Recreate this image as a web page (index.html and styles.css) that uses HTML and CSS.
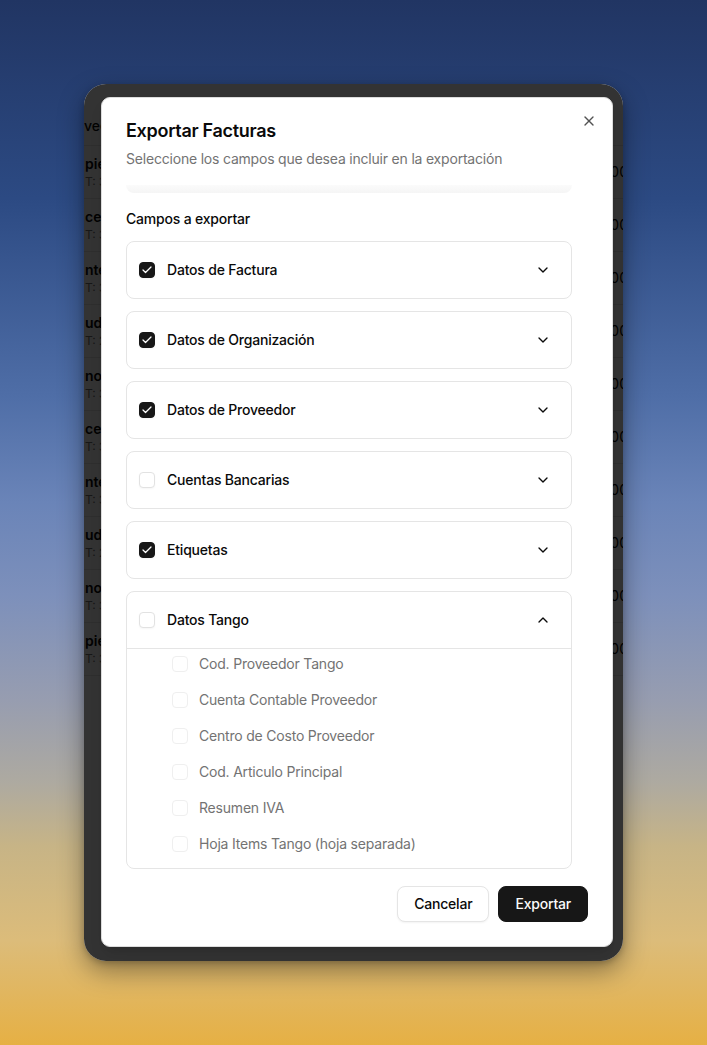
FILE: index.html
```html
<!DOCTYPE html>
<html lang="es">
<head>
<meta charset="utf-8">
<title>Exportar Facturas</title>
<link rel="stylesheet" href="styles.css">
</head>
<body>
<div class="stage">
  <div class="window">
    <div class="table">
      <div class="thead"><span class="th">veedor</span></div>
      <div class="row"><div class="who"><span class="name">pieza Integral SA</span><span class="cuit">T: 30-71526389-4</span></div><span class="amount">$ 1.245.300,00</span></div>
      <div class="row"><div class="who"><span class="name">ceros del Plata SRL</span><span class="cuit">T: 30-70984512-7</span></div><span class="amount">$ 318.450,00</span></div>
      <div class="row"><div class="who"><span class="name">nte Logística SA</span><span class="cuit">T: 30-71233018-2</span></div><span class="amount">$ 86.900,00</span></div>
      <div class="row"><div class="who"><span class="name">udio Contable Ruiz</span><span class="cuit">T: 27-28455109-3</span></div><span class="amount">$ 150.000,00</span></div>
      <div class="row"><div class="who"><span class="name">nos Hermanos SRL</span><span class="cuit">T: 30-70211487-9</span></div><span class="amount">$ 52.780,00</span></div>
      <div class="row"><div class="who"><span class="name">ceros Andinos SA</span><span class="cuit">T: 30-71640025-1</span></div><span class="amount">$ 734.120,00</span></div>
      <div class="row"><div class="who"><span class="name">nte Distribuciones</span><span class="cuit">T: 30-71098833-6</span></div><span class="amount">$ 96.300,00</span></div>
      <div class="row"><div class="who"><span class="name">udio Jurídico Paz</span><span class="cuit">T: 27-30118452-8</span></div><span class="amount">$ 210.000,00</span></div>
      <div class="row"><div class="who"><span class="name">nos Insumos SA</span><span class="cuit">T: 30-70876644-0</span></div><span class="amount">$ 41.560,00</span></div>
      <div class="row"><div class="who"><span class="name">pieza Total SRL</span><span class="cuit">T: 30-71412290-5</span></div><span class="amount">$ 128.900,00</span></div>
    </div>
    <div class="overlay"></div>

    <div class="dialog" role="dialog" aria-labelledby="dlg-title">
      <div class="dialog-header">
        <h2 id="dlg-title" class="dialog-title">Exportar Facturas</h2>
        <p class="dialog-desc">Seleccione los campos que desea incluir en la exportación</p>
      </div>

      <div class="dialog-body">
        <div class="scroll-cap"></div>
        <div class="section-label">Campos a exportar</div>
        <div class="field-list">
          <div class="group">
            <div class="group-head">
              <span class="cb checked"><svg viewBox="0 0 24 24"><path d="M20 6 9 17l-5-5"/></svg></span>
              <span class="group-label">Datos de Factura</span>
              <span class="toggle"><svg viewBox="0 0 24 24"><path d="m6 9 6 6 6-6"/></svg></span>
            </div>
          </div>
          <div class="group">
            <div class="group-head">
              <span class="cb checked"><svg viewBox="0 0 24 24"><path d="M20 6 9 17l-5-5"/></svg></span>
              <span class="group-label">Datos de Organización</span>
              <span class="toggle"><svg viewBox="0 0 24 24"><path d="m6 9 6 6 6-6"/></svg></span>
            </div>
          </div>
          <div class="group">
            <div class="group-head">
              <span class="cb checked"><svg viewBox="0 0 24 24"><path d="M20 6 9 17l-5-5"/></svg></span>
              <span class="group-label">Datos de Proveedor</span>
              <span class="toggle"><svg viewBox="0 0 24 24"><path d="m6 9 6 6 6-6"/></svg></span>
            </div>
          </div>
          <div class="group">
            <div class="group-head">
              <span class="cb"></span>
              <span class="group-label">Cuentas Bancarias</span>
              <span class="toggle"><svg viewBox="0 0 24 24"><path d="m6 9 6 6 6-6"/></svg></span>
            </div>
          </div>
          <div class="group">
            <div class="group-head">
              <span class="cb checked"><svg viewBox="0 0 24 24"><path d="M20 6 9 17l-5-5"/></svg></span>
              <span class="group-label">Etiquetas</span>
              <span class="toggle"><svg viewBox="0 0 24 24"><path d="m6 9 6 6 6-6"/></svg></span>
            </div>
          </div>
          <div class="group">
            <div class="group-head">
              <span class="cb"></span>
              <span class="group-label">Datos Tango</span>
              <span class="toggle"><svg viewBox="0 0 24 24"><path d="m18 15-6-6-6 6"/></svg></span>
            </div>
            <div class="sub-list">
              <div class="sub-item"><span class="cb sub"></span><span>Cod. Proveedor Tango</span></div>
              <div class="sub-item"><span class="cb sub"></span><span>Cuenta Contable Proveedor</span></div>
              <div class="sub-item"><span class="cb sub"></span><span>Centro de Costo Proveedor</span></div>
              <div class="sub-item"><span class="cb sub"></span><span>Cod. Articulo Principal</span></div>
              <div class="sub-item"><span class="cb sub"></span><span>Resumen IVA</span></div>
              <div class="sub-item"><span class="cb sub"></span><span>Hoja Items Tango (hoja separada)</span></div>
            </div>
          </div>
        </div>
      </div>

      <div class="dialog-footer">
        <button class="btn btn-outline" type="button">Cancelar</button>
        <button class="btn btn-primary" type="button">Exportar</button>
      </div>

      <button class="close" type="button" aria-label="Cerrar"><svg viewBox="0 0 24 24"><path d="M18 6 6 18"/><path d="m6 6 12 12"/></svg></button>
    </div>
  </div>
</div>
</body>
</html>
```

FILE: styles.css
```css
* { box-sizing: border-box; }

html, body { margin: 0; }

body {
  font-family: Inter, "Noto Sans", "Liberation Sans", sans-serif;
  color: #0a0a0a;
  min-height: 1045px;
  background: linear-gradient(180deg,
    #213563 0%,
    #2c4a83 19%,
    #4f6ea7 38%,
    #6a84b8 48%,
    #7d90bb 57%,
    #979db0 67%,
    #aeaaa0 75%,
    #c7b486 81%,
    #dcbc7a 90%,
    #e6b044 100%);
}

.stage {
  height: 1045px;
  padding: 84px 0 0 84px;
}

/* app window behind the modal */
.window {
  position: relative;
  width: 539px;
  height: 877px;
  border-radius: 22px;
  overflow: hidden;
  background: #fff;
  box-shadow: 0 10px 26px rgba(0, 0, 0, .38), 0 2px 6px rgba(0, 0, 0, .2);
}

.table {
  width: 560px;
}

.thead {
  height: 62px;
  padding-top: 31px;
  border-bottom: 1px solid #e5e5e5;
}

.th {
  font-size: 14px;
  line-height: 20px;
  font-weight: 500;
  color: #0a0a0a;
  white-space: nowrap;
}

.row {
  height: 53px;
  display: flex;
  align-items: center;
  justify-content: space-between;
  border-bottom: 1px solid #e5e5e5;
  padding-right: 16px;
}

.who {
  display: flex;
  flex-direction: column;
  margin-top: -1px;
  padding-left: 1px;
}

.name {
  font-size: 14px;
  line-height: 20px;
  font-weight: 600;
  white-space: nowrap;
}

.cuit {
  font-size: 12px;
  line-height: 16px;
  color: #737373;
  white-space: nowrap;
}

.amount {
  font-size: 14px;
  line-height: 20px;
  white-space: nowrap;
}

.overlay {
  position: absolute;
  inset: 0;
  background: rgba(0, 0, 0, .8);
}

/* modal */
.dialog {
  position: absolute;
  top: 13px;
  left: 17px;
  width: 512px;
  background: #fff;
  border: 1px solid #dcdcdc;
  border-radius: 9px;
  padding: 24px 24px 24px;
  display: flex;
  flex-direction: column;
  gap: 16px;
  letter-spacing: -0.2px;
  box-shadow: 0 10px 15px -3px rgba(0, 0, 0, .1), 0 4px 6px -4px rgba(0, 0, 0, .1);
}

.dialog-header {
  display: flex;
  flex-direction: column;
  gap: 9px;
}

.dialog-title {
  margin: 0;
  font-size: 18px;
  line-height: 18px;
  font-weight: 600;
  letter-spacing: -0.3px;
}

.dialog-desc {
  margin: 0;
  font-size: 14px;
  line-height: 20px;
  color: #737373;
}

.dialog-body {
  padding-right: 16px;
  display: flex;
  flex-direction: column;
}

.scroll-cap {
  height: 8px;
  border-radius: 0 0 10px 10px;
  background: linear-gradient(180deg, #fbfbfb, #f5f5f5);
}

.section-label {
  margin-top: 16px;
  font-size: 14px;
  line-height: 20px;
  font-weight: 500;
}

.field-list {
  margin-top: 12px;
  display: flex;
  flex-direction: column;
  gap: 12px;
}

.group {
  border: 1px solid #e5e5e5;
  border-radius: 8px;
}

.group-head {
  height: 56px;
  display: flex;
  align-items: center;
  gap: 12px;
  padding: 0 12px;
}

.group-label {
  flex: 1;
  font-size: 14px;
  line-height: 20px;
  font-weight: 500;
}

.cb {
  flex: none;
  width: 16px;
  height: 16px;
  border-radius: 4px;
  border: 1px solid #e2e2e2;
  background: #fff;
  display: flex;
  align-items: center;
  justify-content: center;
  box-shadow: 0 1px 2px rgba(0, 0, 0, .04);
}

.cb.checked {
  background: #171717;
  border-color: #171717;
}

.cb svg {
  width: 12px;
  height: 12px;
  fill: none;
  stroke: #fff;
  stroke-width: 2.5;
  stroke-linecap: round;
  stroke-linejoin: round;
}

.cb.sub {
  border-color: #efefef;
  box-shadow: none;
}

.toggle {
  width: 32px;
  height: 32px;
  display: flex;
  align-items: center;
  justify-content: center;
  border-radius: 6px;
}

.toggle svg {
  width: 16px;
  height: 16px;
  fill: none;
  stroke: #0a0a0a;
  stroke-width: 2;
  stroke-linecap: round;
  stroke-linejoin: round;
}

.sub-list {
  border-top: 1px solid #e5e5e5;
  padding: 5px 16px 14px 45px;
  display: flex;
  flex-direction: column;
  gap: 16px;
}

.sub-item {
  height: 20px;
  display: flex;
  align-items: center;
  gap: 11px;
  font-size: 14px;
  line-height: 20px;
  color: #737373;
}

.dialog-footer {
  display: flex;
  justify-content: flex-end;
  gap: 9px;
  margin-top: 1px;
}

.btn {
  height: 36px;
  padding: 0 16px;
  border-radius: 8px;
  font-family: inherit;
  font-size: 14px;
  font-weight: 500;
  line-height: 20px;
  letter-spacing: -0.2px;
  cursor: pointer;
}

.btn-outline {
  background: #fff;
  color: #0a0a0a;
  border: 1px solid #e5e5e5;
  box-shadow: 0 1px 2px rgba(0, 0, 0, .05);
}

.btn-primary {
  background: #171717;
  color: #fafafa;
  border: 1px solid #171717;
}

.close {
  position: absolute;
  top: 15px;
  right: 15px;
  width: 16px;
  height: 16px;
  padding: 0;
  border: 0;
  background: none;
  opacity: .7;
  cursor: pointer;
}

.close svg {
  width: 16px;
  height: 16px;
  fill: none;
  stroke: #0a0a0a;
  stroke-width: 2;
  stroke-linecap: round;
  stroke-linejoin: round;
}
```
